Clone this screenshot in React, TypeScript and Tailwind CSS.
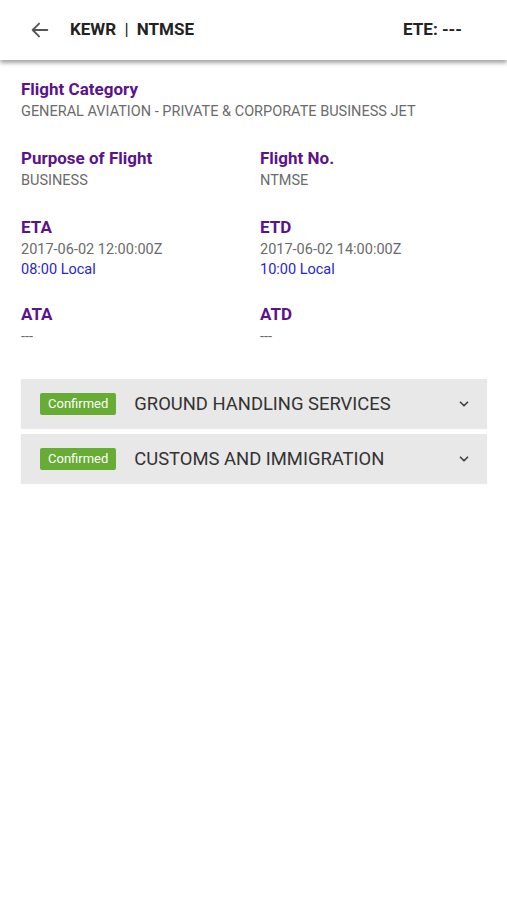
import React from 'react'

const font = { fontFamily: 'Roboto, "Noto Sans", sans-serif' }

function Field({ label, value, local }: { label: string; value: string; local?: string }) {
  return (
    <div className="flex flex-col">
      <div className="text-[17px] leading-[23px] font-bold text-[#5b138c]">{label}</div>
      <div className="text-[14.5px] leading-[22px] text-[#6b6b6b]">{value}</div>
      {local && <div className="text-[14.5px] leading-[18px] text-[#2a24d6]">{local}</div>}
    </div>
  )
}

function Service({ title }: { title: string }) {
  return (
    <div className="flex items-center h-[49px] bg-[#e8e8e8] pl-[19px] pr-[16px] shadow-[0_1px_1px_rgba(0,0,0,0.08)]">
      <span className="bg-[#67ac35] text-white text-[13px] leading-[22px] px-[8px] rounded-[2px]">Confirmed</span>
      <span className="ml-[18px] text-[18.4px] text-[#333] flex-1">{title}</span>
      <svg width="14" height="14" viewBox="0 0 24 24" fill="none" stroke="#444" strokeWidth="3" strokeLinecap="round" strokeLinejoin="round">
        <path d="M6 9l6 6 6-6" />
      </svg>
    </div>
  )
}

export default function App() {
  return (
    <div className="min-h-[900px] bg-white" style={font}>
      <header className="h-[60px] flex items-center bg-white shadow-[0_3px_4px_rgba(0,0,0,0.35)] relative">
        <svg className="ml-[29px]" width="22" height="22" viewBox="0 0 24 24" fill="none" stroke="#555" strokeWidth="2" strokeLinecap="round" strokeLinejoin="round">
          <path d="M20 12H4M11 5l-7 7 7 7" />
        </svg>
        <div className="ml-[19px] text-[17px] font-bold text-[#222] flex-1">
          KEWR <span className="mx-[4px] font-normal">|</span> NTMSE
        </div>
        <div className="mr-[45px] text-[17px] font-bold text-[#222]">ETE: ---</div>
      </header>

      <main className="px-[21px] pt-[18px]">
        <Field label="Flight Category" value="GENERAL AVIATION - PRIVATE & CORPORATE BUSINESS JET" />
        <div className="grid grid-cols-[239px_1fr] gap-y-[24px] mt-[24px]">
          <Field label="Purpose of Flight" value="BUSINESS" />
          <Field label="Flight No." value="NTMSE" />
          <Field label="ETA" value="2017-06-02 12:00:00Z" local="08:00 Local" />
          <Field label="ETD" value="2017-06-02 14:00:00Z" local="10:00 Local" />
          <Field label="ATA" value="---" />
          <Field label="ATD" value="---" />
        </div>
        <div className="flex flex-col gap-[6px] mt-[31px] mr-[-1px]">
          <Service title="GROUND HANDLING SERVICES" />
          <Service title="CUSTOMS AND IMMIGRATION" />
        </div>
      </main>
    </div>
  )
}
